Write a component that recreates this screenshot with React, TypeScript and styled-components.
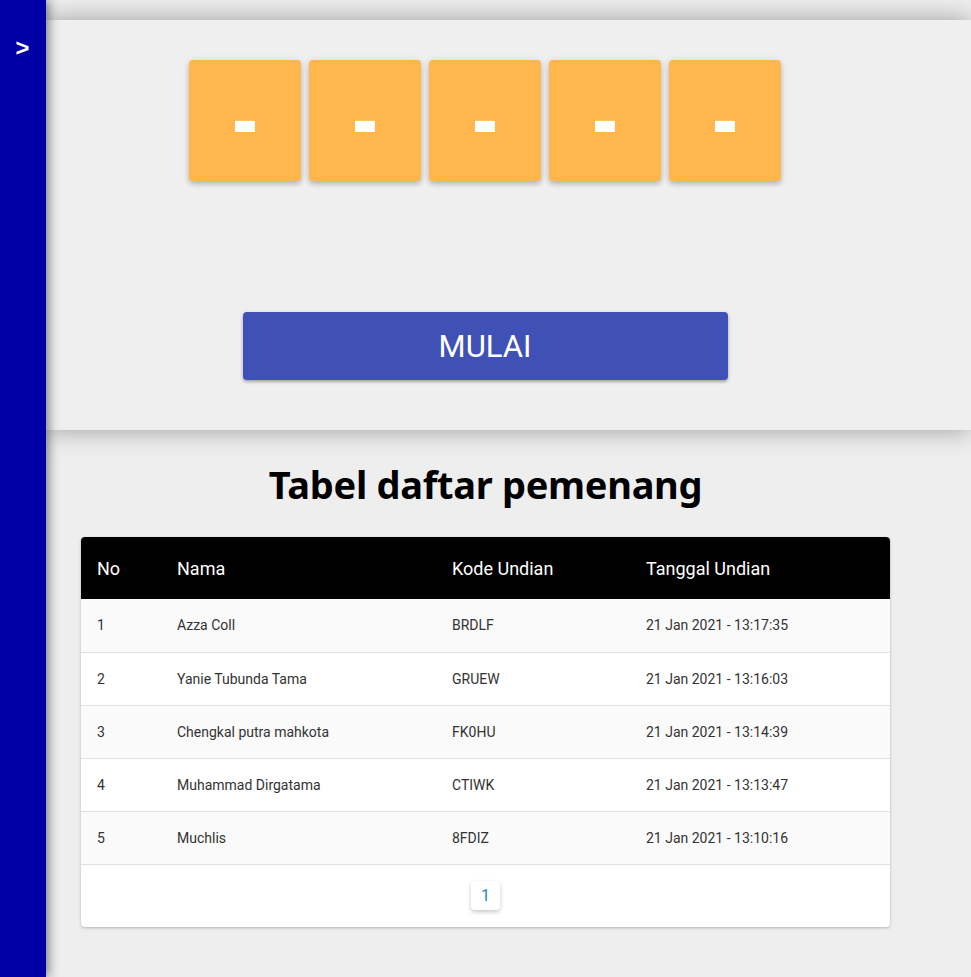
import React from "react";
import styled, { createGlobalStyle } from "styled-components";

const Global = createGlobalStyle`
  html, body { margin: 0; padding: 0; background: #eeeeee; }
  body { font-family: Roboto, "Liberation Sans", sans-serif; overflow: hidden; }
  * { box-sizing: border-box; }
`;

const Page = styled.div`
  display: flex;
  min-height: 977px;
  background: #eeeeee;
`;

const Sidebar = styled.aside`
  position: fixed;
  left: 0;
  top: 0;
  bottom: 0;
  width: 46px;
  background: #0000a5;
  box-shadow: 3px 0 10px rgba(0, 0, 0, 0.45);
  z-index: 5;
  display: flex;
  justify-content: center;
  padding-top: 35px;
`;

const Toggle = styled.span`
  color: #fff;
  font-family: "Liberation Sans", Arial, sans-serif;
  font-weight: 700;
  font-size: 24px;
  line-height: 26px;
  margin-left: -1px;
`;

const Main = styled.main`
  flex: 1;
  margin-left: 46px;
  padding-top: 20px;
  display: flex;
  flex-direction: column;
`;

const TopPanel = styled.section`
  background: #efefef;
  height: 410px;
  padding: 40px 0 0 35px;
  box-shadow: 0 0 24px rgba(0, 0, 0, 0.35);
  position: relative;
  z-index: 1;
`;

const Column = styled.div<{ $w?: number }>`
  width: ${(p) => p.$w ?? 809}px;
  display: flex;
  flex-direction: column;
  align-items: center;
`;

const Tiles = styled.div`
  display: flex;
  gap: 8px;
`;

const Tile = styled.div`
  width: 112px;
  height: 121px;
  background: #ffb74d;
  border-radius: 4px;
  box-shadow: 0 3px 5px rgba(0, 0, 0, 0.2), 0 1px 10px rgba(0, 0, 0, 0.08);
  display: flex;
  align-items: center;
  justify-content: center;
  color: #fff;
  font-family: "Open Sans", sans-serif;
  font-weight: 800;
  font-size: 72px;
  line-height: 1;
  padding-bottom: 6px;
`;

const StartButton = styled.button`
  margin-top: 131px;
  width: 485px;
  height: 68px;
  border: none;
  border-radius: 4px;
  background: #3f51b5;
  color: #fff;
  font-family: Roboto, sans-serif;
  font-size: 31px;
  font-weight: 400;
  box-shadow: 0 2px 3px rgba(0, 0, 0, 0.25), 0 1px 5px rgba(0, 0, 0, 0.1);
  cursor: pointer;
`;

const Lower = styled.section`
  padding: 29px 0 0 35px;
`;

const Heading = styled.h1`
  margin: 0 0 28px;
  font-family: "Noto Sans", "Open Sans", sans-serif;
  font-weight: 700;
  font-size: 38px;
  line-height: 50px;
  letter-spacing: -0.3px;
  color: #000;
  text-align: center;
`;

const TableCard = styled.div`
  width: 809px;
  background: #fff;
  border-radius: 4px;
  overflow: hidden;
  box-shadow: 0 1px 3px rgba(0, 0, 0, 0.25);
`;

const Table = styled.table`
  width: 100%;
  border-collapse: collapse;
`;

const HeadCell = styled.th<{ $w?: number }>`
  background: #000;
  color: #fff;
  text-align: left;
  font-family: Roboto, sans-serif;
  font-weight: 400;
  font-size: 18px;
  height: 62px;
  padding: 0 0 0 16px;
  width: ${(p) => (p.$w ? `${p.$w}px` : "auto")};
`;

const Row = styled.tr<{ $odd: boolean }>`
  background: ${(p) => (p.$odd ? "#fafafa" : "#ffffff")};
  border-bottom: 1px solid #e0e0e0;
`;

const Cell = styled.td`
  height: 53px;
  padding: 0 0 0 16px;
  font-size: 14px;
  color: #333;
  font-family: Roboto, sans-serif;
`;

const Footer = styled.div`
  height: 62px;
  display: flex;
  align-items: center;
  justify-content: center;
`;

const PageButton = styled.button`
  width: 29px;
  height: 29px;
  border: none;
  border-radius: 4px;
  background: #fff;
  color: #1e88c8;
  font-family: Roboto, sans-serif;
  font-size: 16px;
  box-shadow: 0 2px 4px rgba(0, 0, 0, 0.22);
  padding: 0;
`;

const winners = [
  { no: 1, name: "Azza Coll", code: "BRDLF", date: "21 Jan 2021 - 13:17:35" },
  { no: 2, name: "Yanie Tubunda Tama", code: "GRUEW", date: "21 Jan 2021 - 13:16:03" },
  { no: 3, name: "Chengkal putra mahkota", code: "FK0HU", date: "21 Jan 2021 - 13:14:39" },
  { no: 4, name: "Muhammad Dirgatama", code: "CTIWK", date: "21 Jan 2021 - 13:13:47" },
  { no: 5, name: "Muchlis", code: "8FDIZ", date: "21 Jan 2021 - 13:10:16" },
];

export default function App() {
  return (
    <Page>
      <Global />
      <Sidebar>
        <Toggle>&gt;</Toggle>
      </Sidebar>
      <Main>
        <TopPanel>
          <Column $w={808}>
            <Tiles>
              {[0, 1, 2, 3, 4].map((i) => (
                <Tile key={i}>-</Tile>
              ))}
            </Tiles>
            <StartButton>MULAI</StartButton>
          </Column>
        </TopPanel>
        <Lower>
          <Column>
            <Heading>Tabel daftar pemenang</Heading>
            <TableCard>
              <Table>
                <thead>
                  <tr>
                    <HeadCell $w={80}>No</HeadCell>
                    <HeadCell $w={275}>Nama</HeadCell>
                    <HeadCell $w={194}>Kode Undian</HeadCell>
                    <HeadCell>Tanggal Undian</HeadCell>
                  </tr>
                </thead>
                <tbody>
                  {winners.map((w, i) => (
                    <Row key={w.no} $odd={i % 2 === 0}>
                      <Cell>{w.no}</Cell>
                      <Cell>{w.name}</Cell>
                      <Cell>{w.code}</Cell>
                      <Cell>{w.date}</Cell>
                    </Row>
                  ))}
                </tbody>
              </Table>
              <Footer>
                <PageButton>1</PageButton>
              </Footer>
            </TableCard>
          </Column>
        </Lower>
      </Main>
    </Page>
  );
}
